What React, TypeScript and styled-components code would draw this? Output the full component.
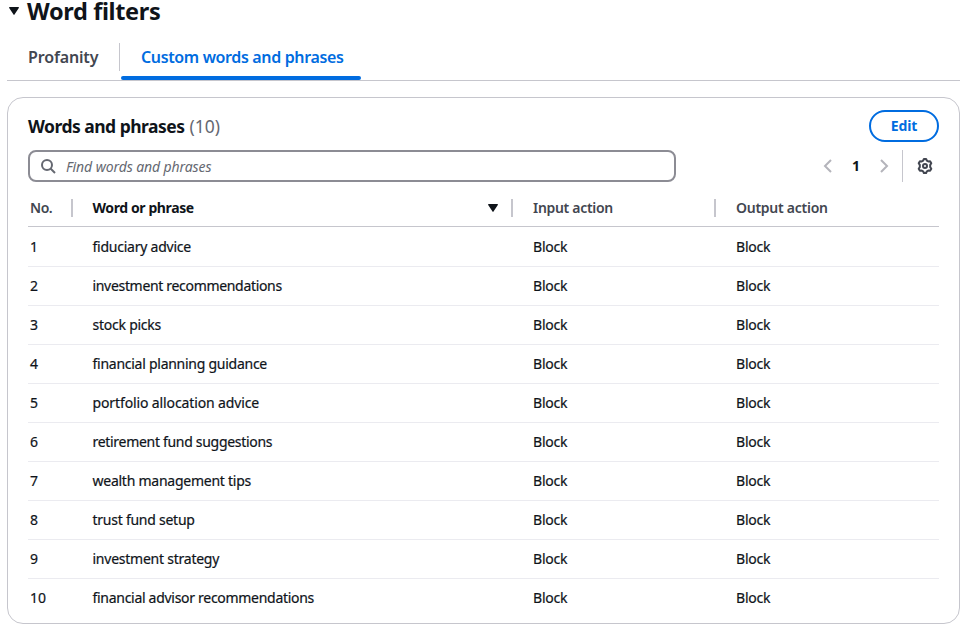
import React from 'react';
import styled, { createGlobalStyle } from 'styled-components';

const GlobalStyle = createGlobalStyle`
  *, *::before, *::after { box-sizing: border-box; }
  body {
    margin: 0;
    background: #fff;
    color: #0f141a;
    font-family: "Noto Sans", "Open Sans", sans-serif;
    font-size: 14px;
    line-height: 20px;
  }
`;

const Page = styled.main`
  width: 971px;
  height: 639px;
  padding: 0 11px 0 7px;
`;

const SectionHeader = styled.header`
  display: flex;
  align-items: flex-start;
  height: 24px;
  gap: 8px;
  padding: 0 0 0 2px;

  > svg { margin-top: 7px; }
`;

const SectionTitle = styled.h2`
  margin: 0;
  font-size: 23.5px;
  line-height: 22px;
  font-weight: 700;
  letter-spacing: -0.35px;
  white-space: nowrap;
`;

const Caret = styled.svg<{ $w: number; $h: number }>`
  display: block;
  flex: none;
  width: ${p => p.$w}px;
  height: ${p => p.$h}px;
  fill: #0f141a;
`;

const Tabs = styled.nav`
  display: flex;
  height: 57px;
  padding-top: 18px;
  border-bottom: 1px solid #c6c6cd;
`;

const Tab = styled.button<{ $active?: boolean; $width: number; $track: number }>`
  display: flex;
  flex-direction: column;
  justify-content: space-between;
  width: ${p => p.$width}px;
  height: 38px;
  margin: 0;
  padding: 5px 0 0;
  border: 0;
  background: none;
  color: ${p => (p.$active ? '#006ce0' : '#424650')};
  font: 600 16px/20px "Noto Sans", sans-serif;
  letter-spacing: ${p => p.$track}px;
  white-space: nowrap;
  text-align: left;

  span { padding-left: ${p => (p.$active ? 20 : 21)}px; }

  &::after {
    content: '';
    display: block;
    width: 100%;
    height: 4px;
    border-radius: 2px;
    background: ${p => (p.$active ? '#006ce0' : 'transparent')};
  }
`;

const TabDivider = styled.i`
  width: 1px;
  height: 28px;
  margin: 1px 1px 0 0;
  background: #c6c6cd;
`;

const Panel = styled.section`
  height: 527px;
  margin-top: 16px;
  padding: 12px 20px 0;
  border: 1px solid #c6c6cd;
  border-radius: 16px;
`;

const PanelHeader = styled.div`
  display: flex;
  align-items: center;
  justify-content: space-between;
  height: 32px;
`;

const PanelTitle = styled.h3`
  margin: 0;
  font-size: 17.5px;
  line-height: 22px;
  font-weight: 700;
  letter-spacing: -0.52px;
`;

const Count = styled.span`
  margin-left: 1px;
  color: #656871;
  font-weight: 400;
  letter-spacing: 0;
`;

const EditButton = styled.button`
  width: 70px;
  height: 32px;
  padding: 0;
  border: 2px solid #006ce0;
  border-radius: 20px;
  background: #fff;
  color: #006ce0;
  font: 700 14px/20px "Noto Sans", sans-serif;
  letter-spacing: -0.1px;
`;

const Toolbar = styled.div`
  display: flex;
  align-items: center;
  height: 32px;
  margin-top: 8px;
`;

const SearchField = styled.label`
  display: flex;
  align-items: center;
  gap: 10px;
  width: 648px;
  height: 32px;
  padding-left: 10px;
  border: 2px solid #8c8c94;
  border-radius: 8px;
`;

const SearchInput = styled.input`
  flex: 1;
  min-width: 0;
  padding: 2px 0 0;
  border: 0;
  outline: 0;
  background: none;
  font: italic 400 14px/20px "Noto Sans", sans-serif;
  letter-spacing: -0.1px;

  &::placeholder { color: #656871; opacity: 1; }
`;

const Pagination = styled.div`
  display: flex;
  align-items: center;
  margin-left: auto;
  height: 32px;
`;

const PageNumber = styled.span`
  width: 40px;
  text-align: center;
  font-weight: 700;
`;

const ToolDivider = styled.i`
  width: 1px;
  height: 32px;
  margin: 0 14px 0 10px;
  background: #c6c6cd;
`;

const Icon = styled.svg<{ $color: string; $gear?: boolean }>`
  display: block;
  flex: none;
  width: 16px;
  height: 16px;
  margin-right: ${p => (p.$gear ? 6 : 0)}px;
  fill: none;
  stroke: ${p => p.$color};
  stroke-width: 2;
`;

const Table = styled.div`
  margin-top: 8px;
`;

const columns = '45px 440px 203px 1fr';

const HeadRow = styled.div`
  display: grid;
  grid-template-columns: ${columns};
  align-items: center;
  height: 37px;
  border-bottom: 1px solid #c6c6cd;
`;

const HeadCell = styled.div<{ $sorted?: boolean; $first?: boolean; $last?: boolean; $track: number }>`
  display: flex;
  align-items: center;
  justify-content: space-between;
  height: 18px;
  padding: 0 ${p => (p.$sorted ? 13 : 0)}px 0 ${p => (p.$first ? 2 : p.$sorted ? 19.5 : 20)}px;
  border-right: ${p => (p.$last ? '0' : '2px solid #c6c6cd')};
  color: ${p => (p.$sorted ? '#0f141a' : '#424650')};
  font-weight: ${p => (p.$sorted ? 700 : 600)};
  letter-spacing: ${p => p.$track}px;
  white-space: nowrap;
`;

const Row = styled.div`
  display: grid;
  grid-template-columns: ${columns};
  align-items: center;
  height: 39px;
  border-bottom: 1px solid #ebebf0;

  &:nth-of-type(2) { height: 40px; }
  &:last-of-type { border-bottom-color: transparent; }
`;

const Cell = styled.div<{ $first?: boolean; $action?: boolean; $track?: number }>`
  padding-left: ${p => (p.$first ? 2 : p.$action ? 20 : 19.5)}px;
  letter-spacing: ${p => p.$track ?? 0}px;
  white-space: nowrap;
  -webkit-text-stroke: 0.2px currentColor;
`;

const phrases: Array<[string, number]> = [
  ['fiduciary advice', -0.24],
  ['investment recommendations', -0.32],
  ['stock picks', -0.24],
  ['financial planning guidance', -0.26],
  ['portfolio allocation advice', -0.12],
  ['retirement fund suggestions', -0.3],
  ['wealth management tips', -0.25],
  ['trust fund setup', -0.25],
  ['investment strategy', -0.24],
  ['financial advisor recommendations', -0.29],
];

const DownCaret = ({ w, h }: { w: number; h: number }) => (
  <Caret $w={w} $h={h} viewBox="0 0 10 8" preserveAspectRatio="none" aria-hidden>
    <path d="M.7 0h8.6c.6 0 .9.6.5 1.1L5.5 7.6c-.2.4-.8.4-1 0L.2 1.1C-.1.6.1 0 .7 0Z" />
  </Caret>
);

export default function App() {
  return (
    <>
      <GlobalStyle />
      <Page>
        <SectionHeader>
          <DownCaret w={10} h={8} />
          <SectionTitle>Word filters</SectionTitle>
        </SectionHeader>

        <Tabs>
          <Tab $width={112} $track={-0.15}><span>Profanity</span></Tab>
          <TabDivider />
          <Tab $active $width={240} $track={-0.36}><span>Custom words and phrases</span></Tab>
        </Tabs>

        <Panel>
          <PanelHeader>
            <PanelTitle>Words and phrases <Count>(10)</Count></PanelTitle>
            <EditButton>Edit</EditButton>
          </PanelHeader>

          <Toolbar>
            <SearchField>
              <Icon $color="#656871" viewBox="0 0 16 16" aria-hidden>
                <circle cx="7" cy="7" r="5" />
                <path d="m15 15-4.5-4.5" />
              </Icon>
              <SearchInput placeholder="Find words and phrases" />
            </SearchField>
            <Pagination>
              <Icon $color="#b4b4bb" viewBox="0 0 16 16" aria-hidden><path d="M11 2 5 8l6 6" /></Icon>
              <PageNumber>1</PageNumber>
              <Icon $color="#b4b4bb" viewBox="0 0 16 16" aria-hidden><path d="m5 2 6 6-6 6" /></Icon>
              <ToolDivider />
              <Icon $gear $color="#424650" viewBox="0 0 16 16" aria-hidden>
                <path strokeLinejoin="round" d="M6.9 1h2.200l.8 1.700 1.300.700 1.900-.200 1.200 2L13.200 6.900v2.200l1.100 1.700-1.200 2-1.900-.200-1.300.700L9.100 15H6.900l-.8-1.700-1.300-.700-1.900.200-1.200-2L2.800 9.100V6.900L1.700 5.200l1.200-2 1.900.200 1.300-.700Z" />
                <circle cx="8" cy="8" r="2" />
              </Icon>
            </Pagination>
          </Toolbar>

          <Table>
            <HeadRow>
              <HeadCell $first $track={-0.45}>No.</HeadCell>
              <HeadCell $sorted $track={-0.4}>Word or phrase<DownCaret w={10} h={8} /></HeadCell>
              <HeadCell $track={-0.3}>Input action</HeadCell>
              <HeadCell $last $track={-0.26}>Output action</HeadCell>
            </HeadRow>
            {phrases.map(([phrase, track], i) => (
              <Row key={phrase}>
                <Cell $first>{i + 1}</Cell>
                <Cell $track={track}>{phrase}</Cell>
                <Cell $action $track={-0.2}>Block</Cell>
                <Cell $action $track={-0.2}>Block</Cell>
              </Row>
            ))}
          </Table>
        </Panel>
      </Page>
    </>
  );
}
